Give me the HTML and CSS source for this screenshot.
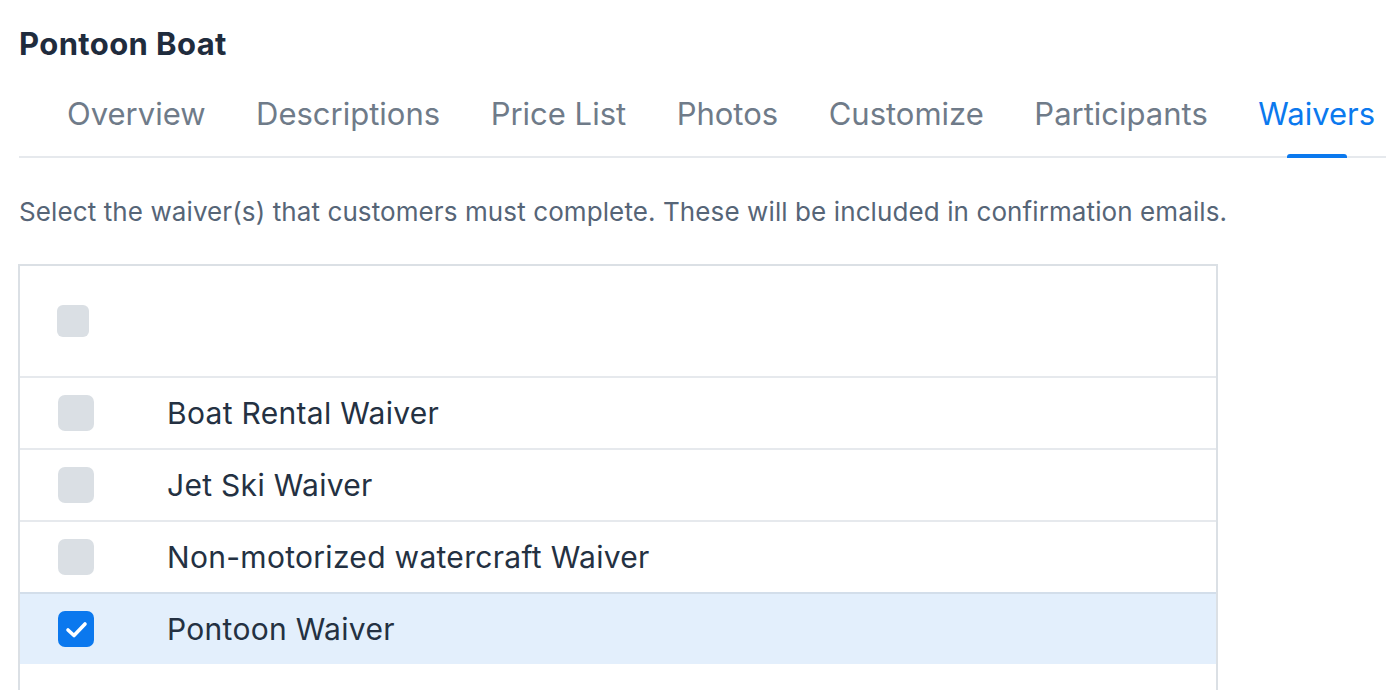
FILE: index.html
```html
<!DOCTYPE html>
<html lang="en">
<head>
<meta charset="utf-8">
<title>Pontoon Boat - Waivers</title>
<link rel="stylesheet" href="styles.css">
</head>
<body>
<div class="page">
  <h1 class="title">Pontoon Boat</h1>
  <nav class="tabs">
    <a class="tab">Overview</a>
    <a class="tab">Descriptions</a>
    <a class="tab">Price List</a>
    <a class="tab">Photos</a>
    <a class="tab">Customize</a>
    <a class="tab">Participants</a>
    <a class="tab active">Waivers</a>
  </nav>
  <p class="intro">Select the waiver(s) that customers must complete. These will be included in confirmation emails.</p>
  <div class="table">
    <div class="row head">
      <span class="check small"></span>
    </div>
    <div class="row">
      <span class="check"></span>
      <span class="label">Boat Rental Waiver</span>
    </div>
    <div class="row">
      <span class="check"></span>
      <span class="label">Jet Ski Waiver</span>
    </div>
    <div class="row">
      <span class="check"></span>
      <span class="label">Non-motorized watercraft Waiver</span>
    </div>
    <div class="row selected">
      <span class="check on">
        <svg viewBox="0 0 36 36" width="36" height="36"><path d="M10 19l6 5.5 11-11.5" fill="none" stroke="#fff" stroke-width="3.6" stroke-linecap="round" stroke-linejoin="round"/></svg>
      </span>
      <span class="label">Pontoon Waiver</span>
    </div>
    <div class="row tail"></div>
  </div>
</div>
</body>
</html>
```

FILE: styles.css
```css
html, body {
  margin: 0;
  padding: 0;
  background: #ffffff;
}
body {
  font-family: Inter, "Noto Sans", "Liberation Sans", sans-serif;
  color: #243142;
}
.page {
  padding: 24px 0 0 19px;
}
.title {
  margin: 0;
  font-size: 31px;
  line-height: 40px;
  font-weight: 700;
  letter-spacing: 0.4px;
  color: #1f2c3d;
}
.tabs {
  display: flex;
  gap: 50.5px;
  padding-left: 48px;
  border-bottom: 2px solid #e6e9ed;
  margin-top: 30px;
}
.tab {
  position: relative;
  font-size: 31px;
  line-height: 40px;
  padding-bottom: 22px;
  color: #6f7b89;
  white-space: nowrap;
}
.tab.active {
  color: #0b79ee;
}
.tab.active::after {
  content: "";
  position: absolute;
  left: 50%;
  bottom: -2px;
  width: 60px;
  margin-left: -30px;
  height: 4px;
  border-radius: 3px 3px 0 0;
  background: #0b79ee;
}
.intro {
  margin: 38px 0 0 0;
  font-size: 26px;
  line-height: 32px;
  color: #566577;
  letter-spacing: 0.1px;
}
.table {
  margin-top: 36px;
  width: 1196px;
  border: 2px solid #dbe0e5;
  border-bottom: none;
  margin-left: -1px;
}
.row {
  display: flex;
  align-items: center;
  height: 70px;
  border-top: 2px solid #e6e9ed;
  padding-left: 38px;
}
.row.head {
  height: 110px;
  border-top: none;
  padding-left: 37px;
}
.row.selected {
  background: #e3effc;
  border-top-color: #d3deea;
}
.row.tail {
  border-top: none;
  height: 40px;
}
.check {
  flex: none;
  width: 36px;
  height: 36px;
  border-radius: 7px;
  background: #dadfe4;
  display: flex;
}
.check.small {
  width: 32px;
  height: 32px;
  border-radius: 6px;
}
.check.on {
  background: #0b78ee;
}
.label {
  margin-left: 73px;
  font-size: 30px;
  letter-spacing: 0.3px;
  color: #243142;
}
```
